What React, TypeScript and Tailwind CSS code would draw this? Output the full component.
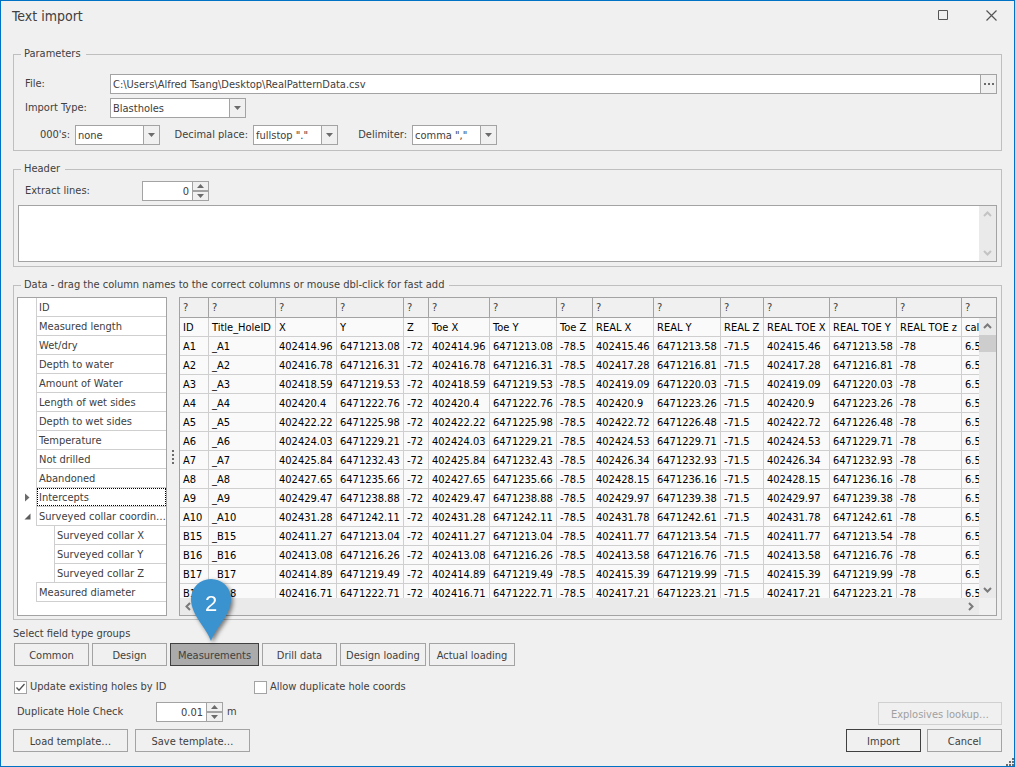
import React, { useState } from "react";

type Item = { label: string; child?: boolean; lastChild?: boolean; expander?: "open" | "closed"; focused?: boolean };

const FIELDS: Item[] = [
  { label: "ID" },
  { label: "Measured length" },
  { label: "Wet/dry" },
  { label: "Depth to water" },
  { label: "Amount of Water" },
  { label: "Length of wet sides" },
  { label: "Depth to wet sides" },
  { label: "Temperature" },
  { label: "Not drilled" },
  { label: "Abandoned" },
  { label: "Intercepts", expander: "closed", focused: true },
  { label: "Surveyed collar coordin…", expander: "open" },
  { label: "Surveyed collar X", child: true },
  { label: "Surveyed collar Y", child: true },
  { label: "Surveyed collar Z", child: true, lastChild: true },
  { label: "Measured diameter" },
];

const COLUMNS: { title: string; width: string }[] = [
  { title: "ID", width: "w-[29px]" },
  { title: "Title_HoleID", width: "w-[67px]" },
  { title: "X", width: "w-[61px]" },
  { title: "Y", width: "w-[67px]" },
  { title: "Z", width: "w-[25px]" },
  { title: "Toe X", width: "w-[61px]" },
  { title: "Toe Y", width: "w-[67px]" },
  { title: "Toe Z", width: "w-[36px]" },
  { title: "REAL X", width: "w-[61px]" },
  { title: "REAL Y", width: "w-[67px]" },
  { title: "REAL Z", width: "w-[43px]" },
  { title: "REAL TOE X", width: "w-[66px]" },
  { title: "REAL TOE Y", width: "w-[67px]" },
  { title: "REAL TOE z", width: "w-[65px]" },
  { title: "cal", width: "" },
];

const HOLES: [string, number, number][] = [
  ["A1", 402414.96, 6471213.08],
  ["A2", 402416.78, 6471216.31],
  ["A3", 402418.59, 6471219.53],
  ["A4", 402420.4, 6471222.76],
  ["A5", 402422.22, 6471225.98],
  ["A6", 402424.03, 6471229.21],
  ["A7", 402425.84, 6471232.43],
  ["A8", 402427.65, 6471235.66],
  ["A9", 402429.47, 6471238.88],
  ["A10", 402431.28, 6471242.11],
  ["B15", 402411.27, 6471213.04],
  ["B16", 402413.08, 6471216.26],
  ["B17", 402414.89, 6471219.49],
  ["B18", 402416.71, 6471222.71],
];

const half = (v: number) => String(Number((v + 0.5).toFixed(2)));

const ROWS = HOLES.map(([id, x, y]) => [
  id, "_" + id, String(x), String(y), "-72", String(x), String(y), "-78.5",
  half(x), half(y), "-71.5", half(x), half(y), "-78", "6.5",
]);

const BUTTON_BASE = "h-[23px] shrink-0 border pt-[2px] text-center leading-[19px] whitespace-nowrap";
const BUTTON = BUTTON_BASE + " border-[#a3a3a3] bg-[#f0f0f0]";

function Group({ title, className, children }: { title: string; className: string; children: React.ReactNode }) {
  return (
    <fieldset className="min-w-0 border border-[#bfbfbf]">
      <legend className="ml-[7px] h-[15px] pr-[5px] pl-[3px] leading-[13px]">{title}</legend>
      <div className={className}>{children}</div>
    </fieldset>
  );
}

function DropDown({ id, value, className }: { id: string; value: string; className: string }) {
  return (
    <div className={"relative h-5 shrink-0 " + className}>
      <select id={id} className="h-5 w-full appearance-none border border-[#a3a3a3] bg-white pt-[2px] pr-4 pl-[2px] leading-4">
        <option>{value}</option>
      </select>
      <span className="pointer-events-none absolute inset-y-px right-px flex w-4 items-center justify-center border-l border-[#a3a3a3] bg-[#f0f0f0]">
        <svg width="7" height="4" viewBox="0 0 7 4"><path d="M0 0H7L3.5 4Z" fill="#6b6b6b" /></svg>
      </span>
    </div>
  );
}

function Spinner({ id, value }: { id: string; value: string }) {
  const [text, setText] = useState(value);
  return (
    <div className="flex h-5 w-[67px] shrink-0 border border-[#a3a3a3] bg-white">
      <input id={id} value={text} onChange={(e) => setText(e.target.value)} className="min-w-0 flex-1 bg-white pt-[2px] pr-[3px] text-right leading-4" />
      <div className="flex w-4 flex-col gap-[2px] border-l border-[#a3a3a3] bg-[#a3a3a3]">
        <button type="button" aria-label="Increase" className="flex flex-1 items-center justify-center bg-[#f0f0f0]">
          <svg width="7" height="4" viewBox="0 0 7 4"><path d="M0 4H7L3.5 0Z" fill="#6b6b6b" /></svg>
        </button>
        <button type="button" aria-label="Decrease" className="flex flex-1 items-center justify-center bg-[#f0f0f0]">
          <svg width="7" height="4" viewBox="0 0 7 4"><path d="M0 0H7L3.5 4Z" fill="#6b6b6b" /></svg>
        </button>
      </div>
    </div>
  );
}

function Chevron({ dir, color }: { dir: "up" | "down" | "left" | "right"; color: string }) {
  const paths = {
    up: "M1 6L4.5 2.5L8 6",
    down: "M1 3L4.5 6.5L8 3",
    left: "M6 1L2.5 4.5L6 8",
    right: "M3 1L6.5 4.5L3 8",
  };
  return (
    <svg width="9" height="9" viewBox="0 0 9 9" fill="none" stroke={color} strokeWidth="2"><path d={paths[dir]} /></svg>
  );
}

function CheckBox({ label, initial, className }: { label: string; initial: boolean; className: string }) {
  const [on, setOn] = useState(initial);
  return (
    <label className={"flex items-center gap-[3px] whitespace-nowrap " + className}>
      <span className="relative block size-[13px]">
        <input type="checkbox" checked={on} onChange={() => setOn(!on)} className="block size-[13px] appearance-none border border-[#a3a3a3] bg-white" />
        {on && (
          <svg className="pointer-events-none absolute inset-0" width="13" height="13" viewBox="0 0 13 13" fill="none" stroke="#505050" strokeWidth="1.3">
            <path d="M2.5 6.5L5 9.3L10.5 3" />
          </svg>
        )}
      </span>
      {label}
    </label>
  );
}

function FieldList() {
  return (
    <ul className="w-[150px] shrink-0 border border-[#a3a3a3] bg-white">
      {FIELDS.map((f) => (
        <li key={f.label} className="flex h-[19px]">
          <span className="flex w-[18px] shrink-0 items-center justify-center">
            {f.expander === "closed" && (
              <button type="button" aria-label="Expand">
                <svg width="5" height="9" viewBox="0 0 5 9"><path d="M0 0.5L4.5 4.5L0 8.5Z" fill="#6b6b6b" /></svg>
              </button>
            )}
            {f.expander === "open" && (
              <button type="button" aria-label="Collapse">
                <svg width="7" height="7" viewBox="0 0 7 7"><path d="M6.5 0.5V6.5H0.5Z" fill="#5c5c5c" /></svg>
              </button>
            )}
          </span>
          {f.child && <span className={"w-[18px] shrink-0 " + (f.lastChild ? "border-b border-[#cfcfcf]" : "")} />}
          <span className="min-w-0 flex-1 border-b border-l border-[#cfcfcf]">
            <span className={"block h-[18px] whitespace-nowrap " + (f.focused ? "border border-dotted border-black pl-px leading-[17px]" : "pl-[2px] leading-[19px]")}>
              {f.label}
            </span>
          </span>
        </li>
      ))}
    </ul>
  );
}

function DataGrid() {
  return (
    <div className="min-w-0 flex-1 border border-[#a3a3a3]">
      <div className="relative h-[300px] overflow-hidden">
        <table className="w-full table-fixed border-separate border-spacing-0 text-left">
          <thead>
            <tr>
              {COLUMNS.map((c) => (
                <th key={c.title} className={"h-5 border-b border-[#a3a3a3] p-0 pl-[3px] font-normal leading-[18px] not-last:border-r " + c.width}>?</th>
              ))}
            </tr>
          </thead>
          <tbody className="bg-[#fafafa] text-black">
            {[COLUMNS.map((c) => c.title), ...ROWS].map((row, r) => (
              <tr key={r}>
                {row.map((v, i) => (
                  <td key={i} className="h-[19px] border-b border-[#cfcfcf] p-0 pt-[2px] pl-[3px] leading-4 whitespace-nowrap not-last:border-r">{v}</td>
                ))}
              </tr>
            ))}
          </tbody>
        </table>
        <div className="absolute top-5 right-0 bottom-0 flex w-[17px] flex-col items-center bg-[#eaeaea]">
          <span className="flex h-[17px] items-center"><Chevron dir="up" color="#7a7a7a" /></span>
          <span className="h-[17px] w-full bg-[#cdcdcd]" />
          <span className="mt-auto flex h-[17px] items-center"><Chevron dir="down" color="#7a7a7a" /></span>
        </div>
      </div>
      <div className="flex h-[17px]">
        <div className="flex flex-1 items-center justify-between bg-[#eaeaea] px-1">
          <Chevron dir="left" color="#7a7a7a" />
          <Chevron dir="right" color="#7a7a7a" />
        </div>
        <div className="w-[17px]" />
      </div>
    </div>
  );
}

function Pin() {
  return (
    <svg className="pointer-events-none absolute bottom-full left-[21px] overflow-visible drop-shadow-[2px_2px_2px_rgba(0,0,0,0.5)]" width="40" height="64" viewBox="0 0 40 64">
      <path d="M20 62C15 48 0 36 0 20A20 20 0 0 1 40 20C40 36 25 48 20 62Z" fill="#3a92cf" />
      <text x="20" y="32" textAnchor="middle" fill="#fff" fontSize="22" fontFamily="Liberation Sans, sans-serif">2</text>
    </svg>
  );
}

export default function App() {
  const [file, setFile] = useState("C:\\Users\\Alfred Tsang\\Desktop\\RealPatternData.csv");
  return (
    <main className="relative min-h-screen border border-[#0072c6] bg-[#f0f0f0] px-3 pb-[14px] font-['DejaVu_Sans_Condensed','DejaVu_Sans',sans-serif] text-[11px] leading-4 text-[#404040]">
      <header className="flex h-[46px] items-start justify-between pt-[3px] pr-[5px]">
        <h1 className="-ml-px text-[14px] leading-6">Text import</h1>
        <div className="flex h-[22px] items-center gap-[37px]">
          <button type="button" aria-label="Maximize">
            <svg width="11" height="11" viewBox="0 0 11 11" fill="none" stroke="#555"><path d="M0.5 0.5H9.5V9.5H0.5Z" /></svg>
          </button>
          <button type="button" aria-label="Close">
            <svg width="11" height="11" viewBox="0 0 11 11" fill="none" stroke="#555" strokeWidth="1.2"><path d="M0.5 0.5L10.5 10.5M10.5 0.5L0.5 10.5" /></svg>
          </button>
        </div>
      </header>

      <div className="flex flex-col gap-[11px]">
        <Group title="Parameters" className="pt-3 pr-1 pb-[5px]">
          <div className="flex items-center">
            <label htmlFor="file" className="w-24 shrink-0 pl-[11px]">File:</label>
            <div className="flex h-5 min-w-0 flex-1 border border-[#a3a3a3]">
              <input id="file" value={file} onChange={(e) => setFile(e.target.value)} className="min-w-0 flex-1 bg-white pt-[2px] pl-[2px] leading-4" />
              <button type="button" aria-label="Browse" className="flex w-4 items-center justify-center gap-[2px] border-l border-[#a3a3a3]">
                <span className="size-[2px] bg-[#6b6b6b]" />
                <span className="size-[2px] bg-[#6b6b6b]" />
                <span className="size-[2px] bg-[#6b6b6b]" />
              </button>
            </div>
          </div>
          <div className="mt-1 flex items-center">
            <label htmlFor="type" className="w-24 shrink-0 pl-[11px]">Import Type:</label>
            <DropDown id="type" value="Blastholes" className="w-[136px]" />
          </div>
          <div className="mt-[7px] flex items-center text-right">
            <label htmlFor="thousands" className="w-[61px] shrink-0 pr-[5px]">000's:</label>
            <DropDown id="thousands" value="none" className="w-[85px]" />
            <label htmlFor="decimal" className="w-[93px] shrink-0 pr-[5px]">Decimal place:</label>
            <DropDown id="decimal" value={'fullstop "."'} className="w-[85px]" />
            <label htmlFor="delimiter" className="w-[74px] shrink-0 pr-[5px]">Delimiter:</label>
            <DropDown id="delimiter" value={'comma ","'} className="w-[85px]" />
          </div>
        </Group>

        <Group title="Header" className="px-1 py-1">
          <div className="flex items-center">
            <label htmlFor="lines" className="w-[124px] shrink-0 pl-[7px]">Extract lines:</label>
            <Spinner id="lines" value="0" />
          </div>
          <div className="mt-1 flex h-[57px] border border-[#a3a3a3] bg-white">
            <textarea aria-label="Header lines" className="min-w-0 flex-1 resize-none bg-white px-1" />
            <div className="flex w-[17px] flex-col items-center justify-between bg-[#eaeaea] py-1">
              <Chevron dir="up" color="#c3c3c3" />
              <Chevron dir="down" color="#c3c3c3" />
            </div>
          </div>
        </Group>

        <Group title="Data - drag the column names to the correct columns or mouse dbl-click for fast add" className="flex pt-1 pr-1 pb-[3px] pl-[3px]">
          <FieldList />
          <div className="flex w-3 shrink-0 flex-col items-center justify-center gap-[2px]">
            <span className="size-[2px] bg-[#6b6b6b]" />
            <span className="size-[2px] bg-[#6b6b6b]" />
            <span className="size-[2px] bg-[#6b6b6b]" />
            <span className="size-[2px] bg-[#6b6b6b]" />
          </div>
          <DataGrid />
        </Group>
      </div>

      <p className="mt-[6px]">Select field type groups</p>
      <div className="mt-px flex gap-[3px] pl-px">
        <button type="button" className={BUTTON + " w-[75px]"}>Common</button>
        <button type="button" className={BUTTON + " w-[75px]"}>Design</button>
        <div className="relative">
          <button type="button" aria-pressed="true" className={BUTTON_BASE + " block w-[89px] border-[#404040] bg-[#ababab]"}>Measurements</button>
          <Pin />
        </div>
        <button type="button" className={BUTTON + " w-[75px]"}>Drill data</button>
        <button type="button" className={BUTTON + " w-[86px]"}>Design loading</button>
        <button type="button" className={BUTTON + " w-[86px]"}>Actual loading</button>
      </div>

      <div className="mt-[13px] flex items-center">
        <CheckBox label="Update existing holes by ID" initial className="w-[241px] pl-px" />
        <CheckBox label="Allow duplicate hole coords" initial={false} className="" />
      </div>
      <div className="mt-[7px] flex items-start justify-between">
        <div className="flex items-center">
          <label htmlFor="check" className="w-[143px] shrink-0 pl-1">Duplicate Hole Check</label>
          <Spinner id="check" value="0.01" />
          <span className="pl-1">m</span>
        </div>
        <button type="button" disabled className={BUTTON_BASE + " w-[124px] border-[#d0d0d0] text-[#a0a0a0]"}>Explosives lookup…</button>
      </div>
      <div className="mt-1 flex items-center justify-between">
        <div className="flex gap-[7px]">
          <button type="button" className={BUTTON + " w-[115px]"}>Load template…</button>
          <button type="button" className={BUTTON + " w-[115px]"}>Save template…</button>
        </div>
        <div className="flex gap-[6px]">
          <button type="button" className={BUTTON_BASE + " w-[75px] border-[#404040]"}>Import</button>
          <button type="button" className={BUTTON + " w-[75px]"}>Cancel</button>
        </div>
      </div>

      <svg className="absolute right-0 bottom-0" width="8" height="8" viewBox="0 0 8 8" fill="#6b6b6b">
        <path d="M6 0h2v2h-2zM3 3h2v2h-2zM6 3h2v2h-2zM0 6h2v2h-2zM3 6h2v2h-2zM6 6h2v2h-2z" />
      </svg>
    </main>
  );
}
